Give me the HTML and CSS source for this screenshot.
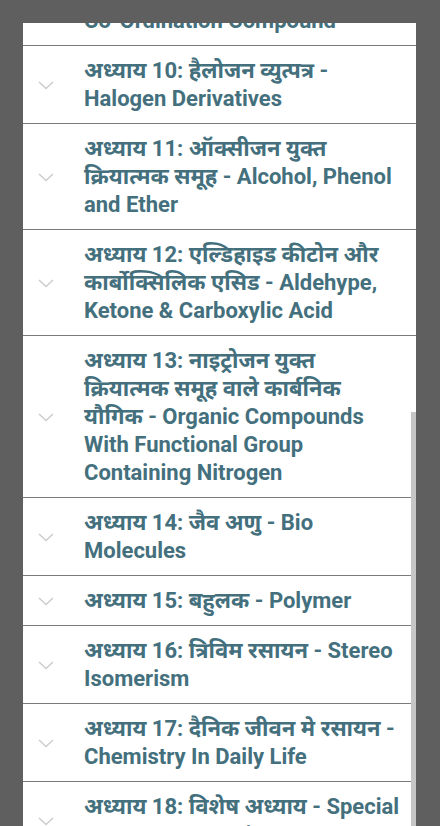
FILE: index.html
```html
<!DOCTYPE html>
<html>
<head>
    <meta charset="utf-8">
    <link rel="stylesheet" href="styles.css">
</head>
<body>
    <div class="sheet">
        <div class="lista">
            <div class="fila primera">
                <svg class="flecha" width="16" height="9" viewBox="0 0 16 9"><polyline points="1,1 8,7.5 15,1"/></svg>
                <p>अध्याय 9: उपसहसंयोजक यौगिक - Co-Ordination Compound</p>
            </div>
            <div class="fila">
                <svg class="flecha" width="16" height="9" viewBox="0 0 16 9"><polyline points="1,1 8,7.5 15,1"/></svg>
                <p>अध्याय 10: हैलोजन व्युत्पत्र - Halogen Derivatives</p>
            </div>
            <div class="fila">
                <svg class="flecha" width="16" height="9" viewBox="0 0 16 9"><polyline points="1,1 8,7.5 15,1"/></svg>
                <p>अध्याय 11: ऑक्सीजन युक्त क्रियात्मक समूह - Alcohol, Phenol and Ether</p>
            </div>
            <div class="fila">
                <svg class="flecha" width="16" height="9" viewBox="0 0 16 9"><polyline points="1,1 8,7.5 15,1"/></svg>
                <p>अध्याय 12: एल्डिहाइड कीटोन और कार्बोक्सिलिक एसिड - Aldehype, Ketone &amp; Carboxylic Acid</p>
            </div>
            <div class="fila">
                <svg class="flecha" width="16" height="9" viewBox="0 0 16 9"><polyline points="1,1 8,7.5 15,1"/></svg>
                <p>अध्याय 13: नाइट्रोजन युक्त क्रियात्मक समूह वाले कार्बनिक यौगिक - Organic Compounds With Functional Group Containing Nitrogen</p>
            </div>
            <div class="fila">
                <svg class="flecha" width="16" height="9" viewBox="0 0 16 9"><polyline points="1,1 8,7.5 15,1"/></svg>
                <p>अध्याय 14: जैव अणु - Bio Molecules</p>
            </div>
            <div class="fila">
                <svg class="flecha" width="16" height="9" viewBox="0 0 16 9"><polyline points="1,1 8,7.5 15,1"/></svg>
                <p>अध्याय 15: बहुलक - Polymer</p>
            </div>
            <div class="fila">
                <svg class="flecha" width="16" height="9" viewBox="0 0 16 9"><polyline points="1,1 8,7.5 15,1"/></svg>
                <p>अध्याय 16: त्रिविम रसायन - Stereo Isomerism</p>
            </div>
            <div class="fila">
                <svg class="flecha" width="16" height="9" viewBox="0 0 16 9"><polyline points="1,1 8,7.5 15,1"/></svg>
                <p>अध्याय 17: दैनिक जीवन मे रसायन - Chemistry In Daily Life</p>
            </div>
            <div class="fila">
                <svg class="flecha" width="16" height="9" viewBox="0 0 16 9"><polyline points="1,1 8,7.5 15,1"/></svg>
                <p>अध्याय 18: विशेष अध्याय - Special Important Questions</p>
            </div>
        </div>
        <div class="barra"></div>
    </div>
</body>
</html>
```

FILE: styles.css
```css
body{
    margin: 0;
    background-color: #5f5f5f;
    font-family: Roboto, "Noto Sans", sans-serif;
}
.sheet{
    position: relative;
    margin: 23px 0 0 23px;
    width: 393px;
    height: 803px;
    overflow: hidden;
    background-color: #ffffff;
}
.lista{
    display: flex;
    flex-direction: column;
}
.fila{
    display: flex;
    align-items: center;
    padding: 11px 12px 10px 15px;
    border-bottom: 1px solid #7b7b7b;
}
.primera{
    margin-top: -55px;
}
.flecha{
    flex-shrink: 0;
    margin-right: 30px;
}
.flecha polyline{
    fill: none;
    stroke: #cbcbcb;
    stroke-width: 1.4;
}
.fila p{
    margin: 0;
    color: #44707e;
    font-size: 22px;
    font-weight: bold;
    line-height: 28px;
}
.barra{
    position: absolute;
    right: 0;
    top: 389px;
    width: 5px;
    height: 420px;
    background-color: #c6c6c6;
}
```
